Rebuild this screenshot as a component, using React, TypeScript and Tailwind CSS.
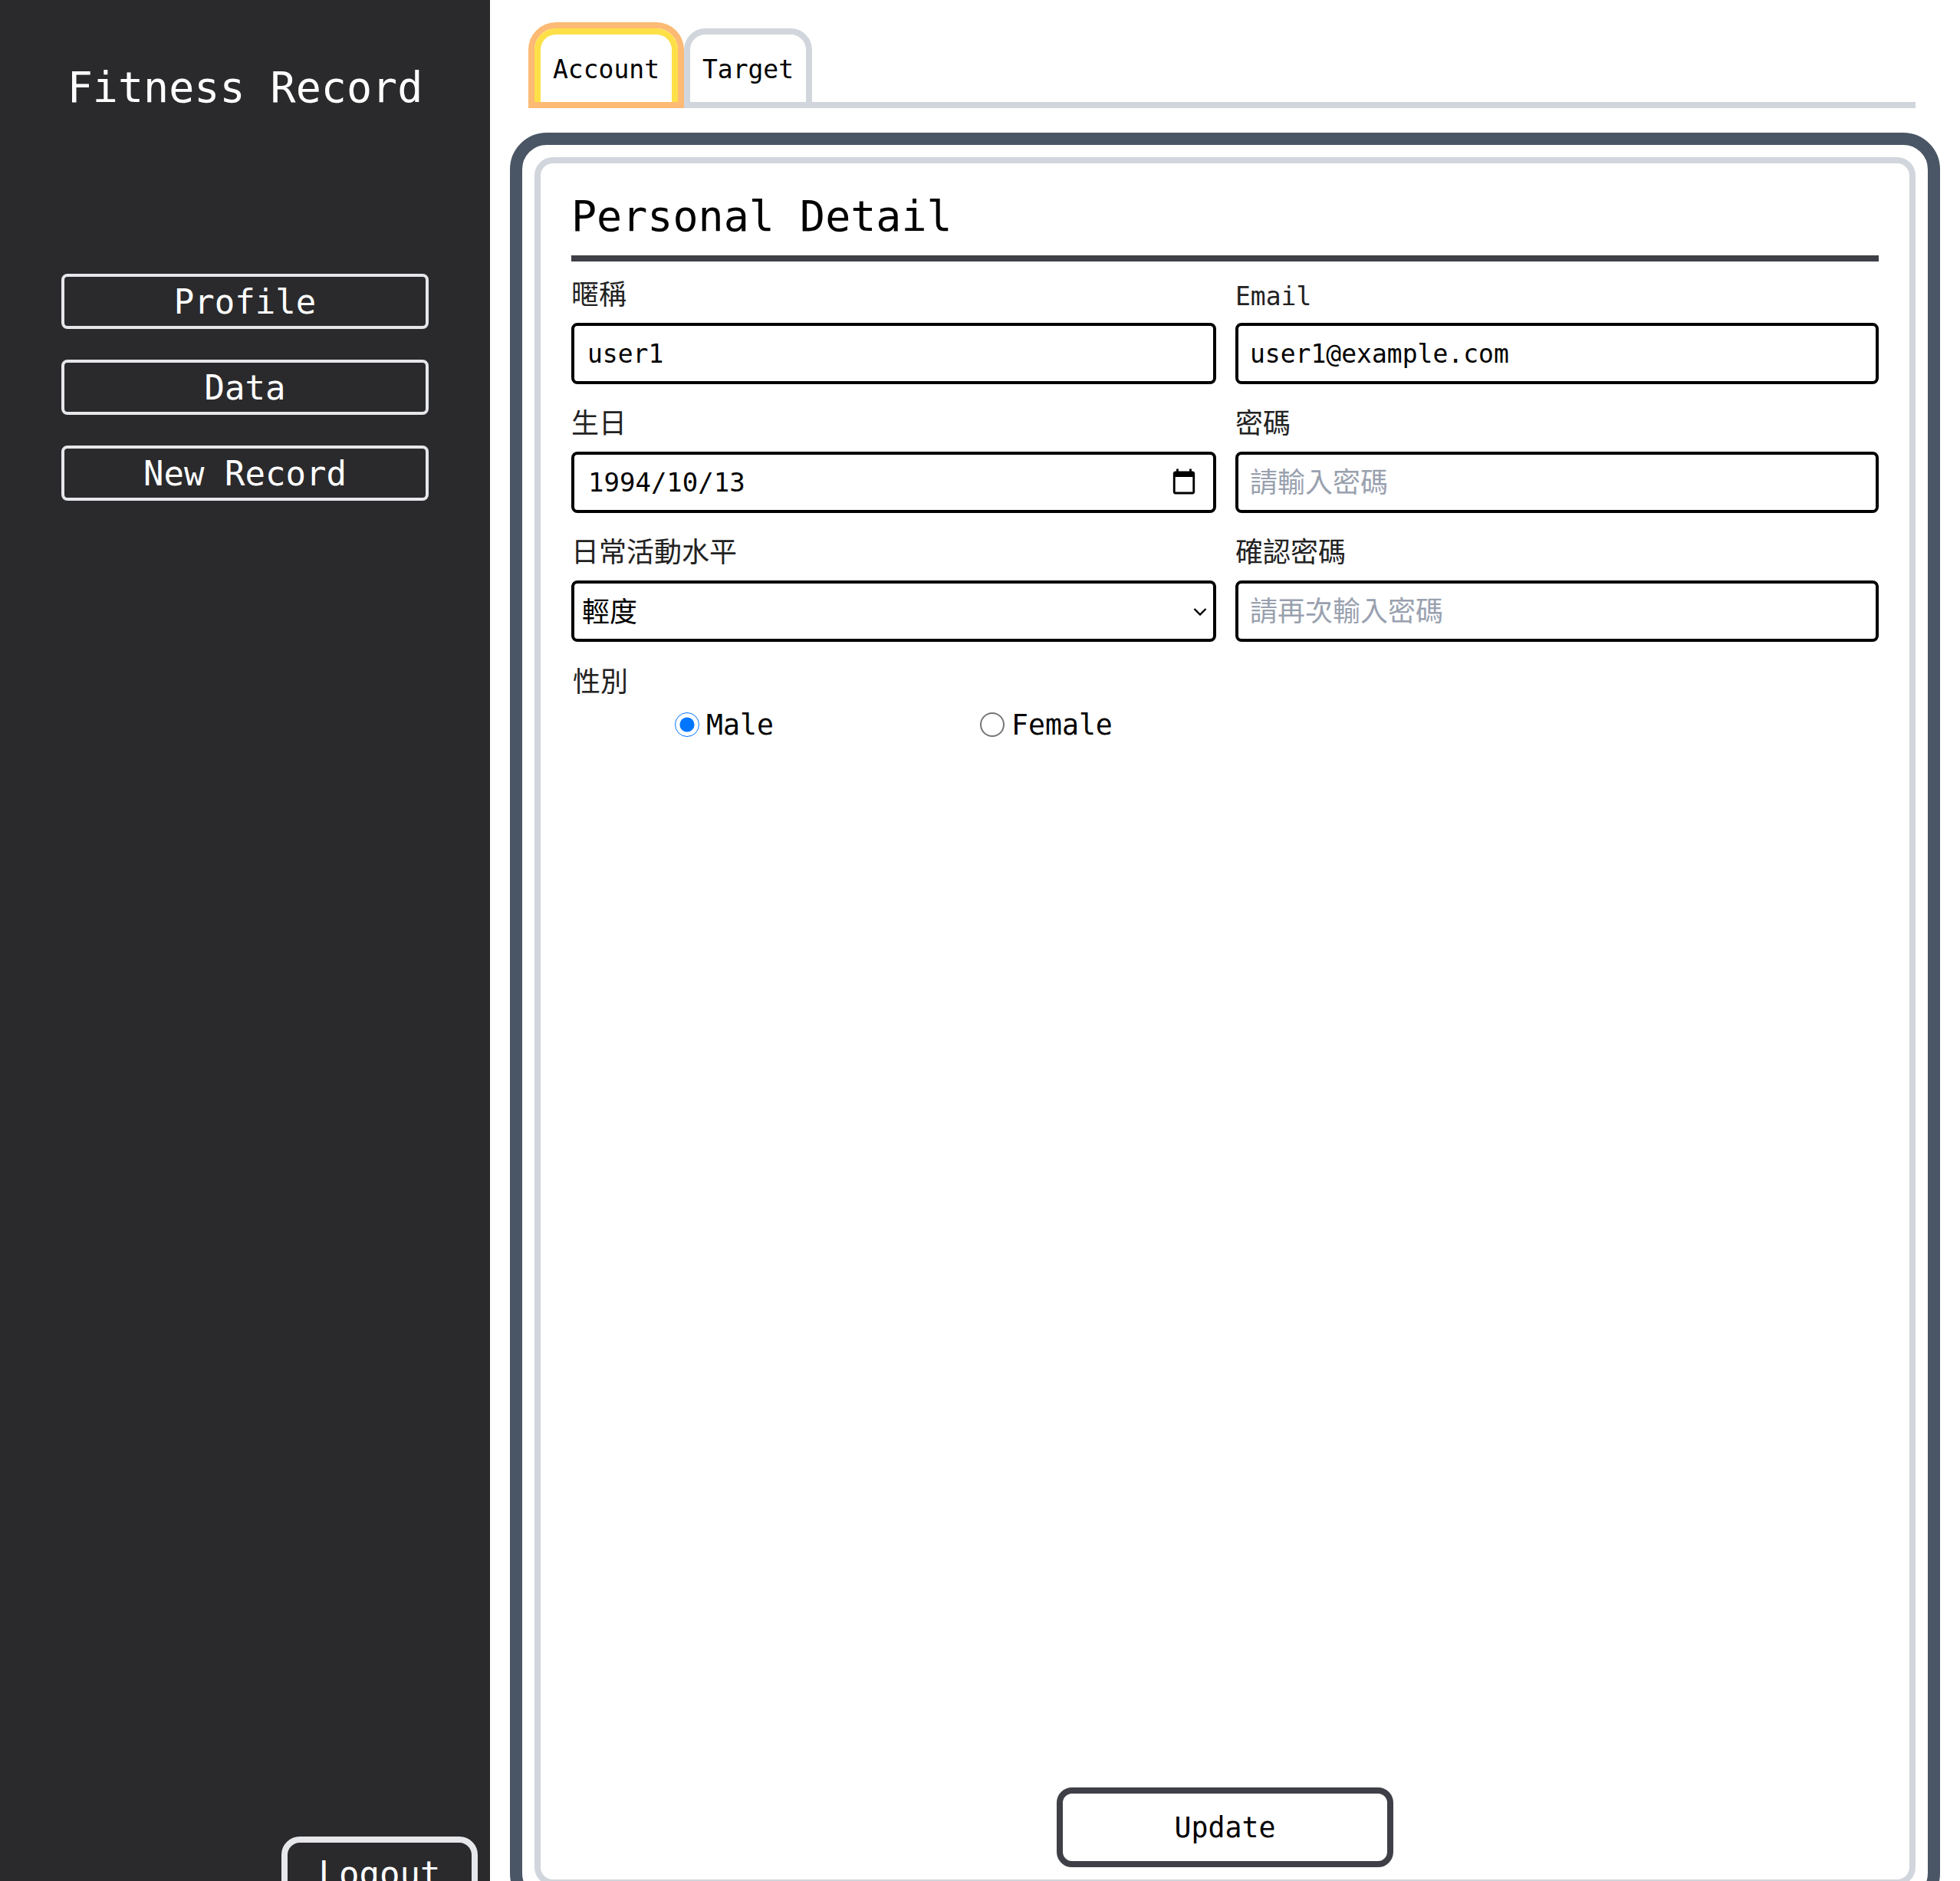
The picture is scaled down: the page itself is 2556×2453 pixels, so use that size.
import React from "react";

const cjk = "font-['Noto_Sans_CJK_TC',sans-serif] text-[36px]";
const fieldBox = "block w-full h-[80px] box-border border-4 border-black rounded-lg bg-white outline-none";

function Label({ children, latin }: { children: React.ReactNode; latin?: boolean }) {
  return (
    <label className={`flex h-[48px] mb-[14px] items-center leading-none text-[#222] ${latin ? "pt-[6px] text-[33px]" : `pb-[4px] ${cjk}`}`}>
      {children}
    </label>
  );
}

function NavButton({ children }: { children: React.ReactNode }) {
  return (
    <button className="box-border flex h-[72px] w-[479px] items-center justify-center rounded-lg border-4 border-gray-200 pt-[2px] text-[44px] leading-none text-white">
      {children}
    </button>
  );
}

export default function App() {
  return (
    <div className="flex h-[2453px] w-[2556px] overflow-hidden bg-white font-['DejaVu_Sans_Mono',monospace] text-black">
      <aside className="flex h-full w-[639px] shrink-0 flex-col bg-[#2a2a2c]">
        <h1 className="mt-[81px] h-[66px] text-center text-[55px] font-normal leading-[66px] text-white">Fitness Record</h1>
        <nav className="ml-[80px] mt-[210px] flex flex-col gap-[40px]">
          <NavButton>Profile</NavButton>
          <NavButton>Data</NavButton>
          <NavButton>New Record</NavButton>
        </nav>
        <button className="ml-[367px] mt-[1742px] box-border h-[104px] w-[256px] shrink-0 rounded-[24px] border-8 border-gray-200 pb-[6px] text-[44px] leading-none text-white">
          Logout
        </button>
      </aside>

      <main className="flex w-[1917px] shrink-0 flex-col pl-[26px]">
        <div className="ml-[24px] box-border flex h-[112px] w-[1809px] shrink-0 mt-[29px] items-end border-b-8 border-gray-300">
          <div className="-mb-2 box-border h-[112px] w-[203px] rounded-t-[36px] border-8 border-[#fdba74]">
            <div className="box-border flex h-full w-full justify-center rounded-t-[28px] border-8 border-b-0 border-[#fde047] pt-[26px] text-[33px] leading-[40px]">
              Account
            </div>
          </div>
          <div className="-mb-2 box-border flex h-[104px] w-[167px] justify-center rounded-t-[28px] border-8 border-gray-300 pt-[26px] text-[33px] leading-[40px]">
            Target
          </div>
        </div>

        <div className="mt-[32px] box-border h-[2318px] w-[1865px] shrink-0 rounded-[48px] border-16 border-gray-600 p-4">
          <section className="box-border flex h-full flex-col rounded-[24px] border-8 border-gray-300 px-[40px] pb-4">
            <h2 className="mt-[29px] h-[91px] border-b-8 border-zinc-700 box-content text-[55px] font-normal leading-[80px]">Personal Detail</h2>

            <div className="mt-[18px] grid grid-cols-[841px_839px] gap-x-[25px] gap-y-[26px]">
              <div>
                <Label>暱稱</Label>
                <input className={`${fieldBox} px-[17px] text-[33px]`} defaultValue="user1" />
              </div>
              <div>
                <Label latin>Email</Label>
                <input className={`${fieldBox} px-[15px] text-[33px]`} defaultValue="user1@example.com" />
              </div>
              <div>
                <Label>生日</Label>
                <div className="relative">
                  <input className={`${fieldBox} px-[18px] text-[34px]`} defaultValue="1994/10/13" />
                  <svg className="absolute left-[782px] top-[21px] h-[36px] w-[34px]" viewBox="0 0 24 24" preserveAspectRatio="none" fill="#000">
                    <path d="M20 3h-1V1h-2v2H7V1H5v2H4c-1.1 0-2 .9-2 2v16c0 1.1.9 2 2 2h16c1.1 0 2-.9 2-2V5c0-1.1-.9-2-2-2zm0 18H4V8h16v13z" />
                  </svg>
                </div>
              </div>
              <div>
                <Label>密碼</Label>
                <input type="password" className={`${fieldBox} pl-[15px] pb-[6px] ${cjk} placeholder:text-gray-400`} placeholder="請輸入密碼" />
              </div>
              <div>
                <Label>日常活動水平</Label>
                <div className="relative">
                  <select className={`${fieldBox} appearance-none pb-[4px] pl-[10px] pr-[40px] ${cjk}`} defaultValue="light">
                    <option value="light">輕度</option>
                  </select>
                  <svg className="pointer-events-none absolute left-[811px] top-[36px] h-[10px] w-[18px]" viewBox="0 0 18 10" fill="none" stroke="#000" strokeWidth="2.4">
                    <path d="M1.5 1 9 8.5 16.5 1" />
                  </svg>
                </div>
              </div>
              <div>
                <Label>確認密碼</Label>
                <input type="password" className={`${fieldBox} pl-[15px] pb-[6px] ${cjk} placeholder:text-gray-400`} placeholder="請再次輸入密碼" />
              </div>
            </div>

            <div className="mt-[27px] pl-[2px]">
              <Label>性別</Label>
            </div>
            <div className="mt-[3px] flex h-[32px] items-center text-[36.5px] leading-none">
              <label className="ml-[135px] flex w-[398px] items-center gap-[9px]">
                <input type="radio" name="gender" defaultChecked className="m-0 h-[32px] w-[32px] shrink-0" />
                <span className="pt-[2px]">Male</span>
              </label>
              <label className="flex items-center gap-[9px]">
                <input type="radio" name="gender" className="m-0 box-border h-[32px] w-[32px] shrink-0 appearance-none rounded-full border-2 border-[#767676] bg-white" />
                <span className="pt-[2px]">Female</span>
              </label>
            </div>

            <button className="mt-auto box-border h-[104px] w-[439px] self-center rounded-[20px] border-8 border-zinc-700 pt-[2px] text-[36.5px] leading-none">
              Update
            </button>
          </section>
        </div>
      </main>
    </div>
  );
}
